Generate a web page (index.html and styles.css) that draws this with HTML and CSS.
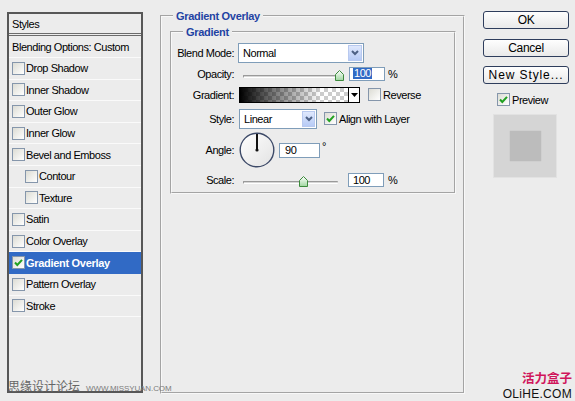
FILE: index.html
```html
<!DOCTYPE html>
<html>
<head>
<meta charset="utf-8">
<link rel="stylesheet" href="styles.css">
</head>
<body>
<div class="dialog">
  <div class="styles-panel">
    <div class="panel-head">Styles</div>
    <ul class="style-list">
      <li class="row first">Blending Options: Custom</li>
      <li class="row"><span class="cb"></span>Drop Shadow</li>
      <li class="row"><span class="cb"></span>Inner Shadow</li>
      <li class="row"><span class="cb"></span>Outer Glow</li>
      <li class="row"><span class="cb"></span>Inner Glow</li>
      <li class="row"><span class="cb"></span>Bevel and Emboss</li>
      <li class="row sub"><span class="cb"></span>Contour</li>
      <li class="row sub"><span class="cb"></span>Texture</li>
      <li class="row"><span class="cb"></span>Satin</li>
      <li class="row"><span class="cb"></span>Color Overlay</li>
      <li class="row selected"><span class="cb"><svg width="11" height="11" viewBox="0 0 11 11"><path d="M2 5.5 L4.3 8 L9 2.8" fill="none" stroke="#21a121" stroke-width="2"/></svg></span>Gradient Overlay</li>
      <li class="row"><span class="cb"></span>Pattern Overlay</li>
      <li class="row"><span class="cb"></span>Stroke</li>
    </ul>
  </div>

  <fieldset class="group outer">
    <legend>Gradient Overlay</legend>
    <fieldset class="group inner">
      <legend>Gradient</legend>

      <div class="frow r-blend">
        <span class="lbl">Blend Mode:</span>
        <div class="select blend"><span class="sel-text">Normal</span><span class="drop"><svg width="8" height="6" viewBox="0 0 8 6"><path d="M1 1 L4 4 L7 1" fill="none" stroke="#4d6185" stroke-width="2"/></svg></span></div>
      </div>

      <div class="frow r-opacity">
        <span class="lbl">Opacity:</span>
        <div class="slider">
          <div class="track"></div>
          <svg class="thumb op-thumb" width="9" height="11" viewBox="0 0 9 11"><defs><linearGradient id="tg1" x1="0" y1="0" x2="0" y2="1"><stop offset="0" stop-color="#ffffff"/><stop offset="1" stop-color="#9fd69f"/></linearGradient></defs><path d="M0.5 4.5 L4.5 0.5 L8.5 4.5 V10.5 H0.5 Z" fill="url(#tg1)" stroke="#3c8a3c"/></svg>
        </div>
        <div class="num op-num"><span class="hl">100</span></div>
        <span class="unit">%</span>
      </div>

      <div class="frow r-gradient">
        <span class="lbl">Gradient:</span>
        <div class="grad">
          <div class="grad-fill"></div>
          <div class="grad-drop"><svg width="7" height="4" viewBox="0 0 7 4"><path d="M0 0 H7 L3.5 4 Z" fill="#000"/></svg></div>
        </div>
        <span class="cb rev"></span><span class="cb-text">Reverse</span>
      </div>

      <div class="frow r-style">
        <span class="lbl">Style:</span>
        <div class="select style"><span class="sel-text">Linear</span><span class="drop"><svg width="8" height="6" viewBox="0 0 8 6"><path d="M1 1 L4 4 L7 1" fill="none" stroke="#4d6185" stroke-width="2"/></svg></span></div>
        <span class="cb align"><svg width="11" height="11" viewBox="0 0 11 11"><path d="M2 5.5 L4.3 8 L9 2.8" fill="none" stroke="#21a121" stroke-width="2"/></svg></span><span class="cb-text">Align with Layer</span>
      </div>

      <div class="frow r-angle">
        <span class="lbl">Angle:</span>
        <svg class="dial" width="36" height="36" viewBox="0 0 36 36"><defs><linearGradient id="dg" x1="0" y1="0" x2="1" y2="1"><stop offset="0" stop-color="#ffffff"/><stop offset="1" stop-color="#e2e2e2"/></linearGradient></defs><circle cx="18" cy="18" r="16.8" fill="url(#dg)" stroke="#3d4a68" stroke-width="1.4"/><line x1="18" y1="18" x2="18" y2="2" stroke="#111" stroke-width="2"/><circle cx="18" cy="18" r="1.6" fill="#111"/></svg>
        <div class="num angle-num">90</div>
        <span class="deg">°</span>
      </div>

      <div class="frow r-scale">
        <span class="lbl">Scale:</span>
        <div class="slider">
          <div class="track short"></div>
          <svg class="thumb sc-thumb" width="9" height="11" viewBox="0 0 9 11"><defs><linearGradient id="tg2" x1="0" y1="0" x2="0" y2="1"><stop offset="0" stop-color="#ffffff"/><stop offset="1" stop-color="#9fd69f"/></linearGradient></defs><path d="M0.5 4.5 L4.5 0.5 L8.5 4.5 V10.5 H0.5 Z" fill="url(#tg2)" stroke="#3c8a3c"/></svg>
        </div>
        <div class="num sc-num">100</div>
        <span class="unit">%</span>
      </div>
    </fieldset>
  </fieldset>

  <div class="actions">
    <div class="btn btn-ok">OK</div>
    <div class="btn btn-cancel">Cancel</div>
    <div class="btn btn-new">New Style...</div>
    <div class="preview-row"><span class="cb"><svg width="11" height="11" viewBox="0 0 11 11"><path d="M2 5.5 L4.3 8 L9 2.8" fill="none" stroke="#21a121" stroke-width="2"/></svg></span><span class="cb-text">Preview</span></div>
    <div class="swatch"><div class="swatch-inner"></div></div>
  </div>
</div>

<div class="wm-left"><span class="wm-cn">思缘设计论坛</span><span class="wm-url">WWW.MISSYUAN.COM</span></div>
<div class="wm-right"><span class="wm-brand">活力盒子</span><span class="wm-site">OLiHE.COM</span></div>
</body>
</html>
```
FILE: styles.css
```css
* { box-sizing: border-box; }
html, body { margin: 0; padding: 0; }
body {
  width: 575px;
  height: 401px;
  overflow: hidden;
  position: relative;
  background: #ececec;
  font-family: "Liberation Sans", Arial, sans-serif;
  font-size: 11px;
  letter-spacing: -0.45px;
  color: #000;
}
.dialog { display: flex; align-items: flex-start; }

/* left styles list */
.styles-panel {
  margin: 12px 0 0 7px;
  width: 136px;
  height: 381px;
  border: 2px solid #575757;
  display: flex;
  flex-direction: column;
}
.panel-head {
  height: 22px;
  padding-left: 3px;
  display: flex;
  align-items: center;
  border-bottom: 3px double #6b6b6b;
}
.style-list { list-style: none; margin: 0; padding: 0; }
.row {
  height: 21.6px;
  display: flex;
  align-items: center;
  padding-left: 3px;
  border-bottom: 1px solid #fafafa;
  white-space: nowrap;
}
.row.first { height: 22px; }
.row .cb { margin-right: 1px; }
.row.sub { padding-left: 16px; }
.row.selected {
  background: #316ac5;
  color: #fff;
  font-weight: bold;
  letter-spacing: -0.3px;
  border-bottom-color: #316ac5;
}

.cb {
  display: inline-flex;
  align-items: center;
  justify-content: center;
  width: 13px;
  height: 13px;
  flex-shrink: 0;
  border: 1px solid #8596ab;
  background: linear-gradient(135deg, #dcdcd4, #ffffff);
}
.cb-text { margin-left: 2px; white-space: nowrap; }

/* fieldsets */
fieldset { margin: 0; min-width: 0; }
.group { border: 2px groove #f8f8f8; }
.group legend {
  margin-left: 11px;
  padding: 0 3px;
  line-height: 12px;
  font-weight: bold;
  letter-spacing: -0.3px;
  color: #1f43a3;
}
.outer {
  margin: 10px 0 0 17px;
  width: 305px;
  height: 384px;
  padding: 4px 0 0 0;
}
.inner {
  margin-left: 8px;
  width: 286px;
  height: 168px;
  padding: 4px 0 0 0;
}
.frow { display: flex; align-items: center; }
.r-blend { height: 22px; }
.r-opacity { height: 19px; }
.r-gradient { height: 23px; }
.r-style { height: 25px; }
.r-angle { height: 37px; }
.r-scale { height: 23px; }
.lbl {
  width: 62px;
  flex-shrink: 0;
  text-align: right;
  margin-right: 4px;
  white-space: nowrap;
}

.select {
  display: flex;
  align-items: stretch;
  height: 20px;
  border: 1px solid #7f9db9;
  background: #fff;
}
.select.blend { width: 126px; }
.select.style { width: 78px; margin-left: 1px; }
.sel-text { flex: 1; display: flex; align-items: center; padding-left: 4px; }
.drop {
  width: 14px;
  margin: 1px;
  display: flex;
  align-items: center;
  justify-content: center;
  border: 1px solid #b8c9ef;
  background: linear-gradient(#dfe8fd, #b7cbf6);
}
.select.style .drop { width: 13px; }

.slider {
  position: relative;
  width: 100px;
  height: 11px;
  margin-left: 5px;
  margin-top: 3px;
}
.track {
  margin-top: 5px;
  width: 97px;
  height: 3px;
  background: #d6d6d6;
  border-top: 1px solid #9a9a9a;
  border-bottom: 1px solid #ffffff;
  border-left: 1px solid #9a9a9a;
  border-radius: 1px;
}
.track.short { width: 95px; }
.thumb { position: absolute; top: 0; }
.op-thumb { left: 92px; }
.sc-thumb { left: 56px; }

.num {
  height: 14px;
  border: 1px solid #7f9db9;
  background: #fff;
  display: flex;
  align-items: center;
  padding-left: 4px;
}
.op-num { width: 36px; margin-left: 6px; padding-left: 3px; }
.hl { background: #316ac5; color: #fff; padding: 0 1px; line-height: 11px; }
.sc-num { width: 36px; margin-left: 5px; }
.unit { margin-left: 3px; }
.r-scale .unit { margin-left: 4px; }

.grad {
  margin-left: 1px;
  width: 121px;
  height: 16px;
  border: 1px solid #000;
  display: flex;
}
.grad-fill {
  flex: 1;
  background-image:
    linear-gradient(to right, #000 0%, rgba(0,0,0,0.55) 30%, rgba(0,0,0,0) 75%),
    conic-gradient(#cccccc 25%, #ffffff 0 50%, #cccccc 0 75%, #ffffff 0);
  background-size: 100% 100%, 8px 8px;
}
.grad-drop {
  width: 11px;
  border-left: 1px solid #000;
  background: #fff;
  display: flex;
  align-items: center;
  justify-content: center;
}
.cb.rev { margin-left: 8px; }
.cb.align { margin-left: 7px; }

.dial { margin-left: 1px; flex-shrink: 0; }
.angle-num { width: 41px; height: 15px; margin-left: 4px; margin-top: 1px; padding-left: 5px; }
.deg { align-self: flex-start; margin-top: 9px; margin-left: 2px; }

/* right column */
.actions {
  margin: 11px 0 0 18px;
  width: 86px;
  display: flex;
  flex-direction: column;
}
.btn {
  height: 18px;
  border: 1px solid #2e3d5c;
  border-radius: 3px;
  background: linear-gradient(#fefefe, #e9e9e9);
  display: flex;
  align-items: center;
  justify-content: center;
  font-size: 12px;
  letter-spacing: -0.3px;
  white-space: nowrap;
}
.btn-ok { margin-bottom: 10px; }
.btn-cancel { margin-bottom: 9px; }
.btn-new { letter-spacing: 0.9px; }
.preview-row {
  margin-top: 9px;
  padding-left: 14px;
  display: flex;
  align-items: center;
  height: 13px;
}
.swatch {
  margin: 8px 0 0 10px;
  width: 64px;
  height: 64px;
  background: #d5d5d5;
  border: 1px solid #e2e2e2;
  display: flex;
  align-items: center;
  justify-content: center;
}
.swatch-inner {
  width: 31px;
  height: 30px;
  background: #bcbcbc;
  box-shadow: 0 0 1px #b0b0b0;
}

/* watermarks (overlaid) */
.wm-left {
  position: absolute;
  left: 8px;
  top: 377px;
  display: flex;
  align-items: baseline;
  letter-spacing: 0;
}
.wm-cn {
  font-family: "Noto Sans CJK SC", sans-serif;
  font-size: 12px;
  color: #666;
}
.wm-url {
  margin-left: 6px;
  font-size: 8px;
  color: #7c7c7c;
  letter-spacing: -0.1px;
}
.wm-right {
  position: absolute;
  right: 3px;
  bottom: 1px;
  display: flex;
  flex-direction: column;
  align-items: flex-end;
  letter-spacing: 0;
}
.wm-brand {
  font-family: "Noto Sans CJK SC", sans-serif;
  font-weight: bold;
  font-size: 12.5px;
  line-height: 15px;
  margin-bottom: 3px;
  color: #d0155b;
}
.wm-site {
  font-size: 12px;
  line-height: 12px;
  letter-spacing: 0.3px;
  color: #111;
}
```
